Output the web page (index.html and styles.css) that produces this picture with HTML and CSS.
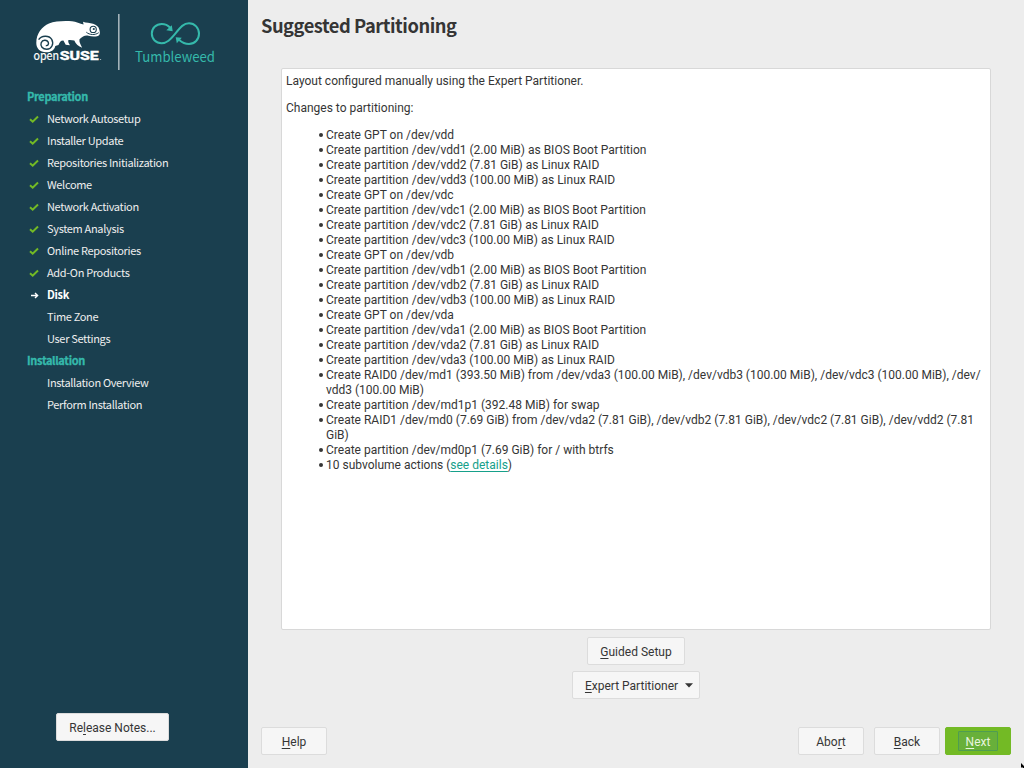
FILE: index.html
```html
<!DOCTYPE html>
<html lang="en">
<head>
<meta charset="utf-8">
<title>Suggested Partitioning</title>
<link rel="stylesheet" href="styles.css">
</head>
<body>
<div class="installer">
  <aside class="sidebar">
    <svg class="brand" width="248" height="85" viewBox="0 0 248 85">
      <path class="chameleon" d="M46 52.3C40 52.3 36.3 48.5 36.3 43C36.3 33.5 42 26.5 49 23.5C55 21 65 20.7 72 21.3C76 21.7 80 23.8 83.6 24.6L83 21.8C86 23 90 22.8 93 23.8C96.5 25 98.5 26.5 99.2 29.2C99.9 31.5 100.3 33.5 99.3 34.9C97.5 37 92 36.7 88.5 35.8C85 35 82.5 36.5 79.5 39.3C79 42 80.3 44 82.2 47.7C78.5 46.8 75.8 44 74.3 40.6C72.5 40 70 39.7 68.4 40C67.8 42 68.9 43.4 70 45.3L65.7 44.8L63.4 40.6C60.5 40.5 59.7 42.4 58.5 45L55.3 46C54.5 50 51 52.3 46 52.3Z"/>
      <path class="spiral" d="M38.6 39.6C41.5 35.4 48.8 34.8 51.7 39.3C54.2 43.8 51.6 49.2 46.7 49.3C42.6 49.3 40 46 41.2 42.8C42.5 39.6 46.8 39.4 48.2 42.1C49.1 44.2 47.8 46 45.8 45.5"/>
      <circle class="eye" cx="93.2" cy="29.4" r="3.1"/>
      <circle class="pupil" cx="93.8" cy="29" r="1.1"/>
      <path class="mouth" d="M86.3 32.2C89.5 35 95 35.4 98.7 32.7"/>
      <text class="logo-open" x="33.5" y="60.2" textLength="25.5" lengthAdjust="spacingAndGlyphs">open</text>
      <text class="logo-suse" x="59.7" y="60.2" textLength="39" lengthAdjust="spacingAndGlyphs">SUSE</text>
      <circle class="logo-mark" cx="100.6" cy="59.5" r=".6"/>
      <path class="divider" d="M118.8 14V70"/>
      <path class="loop" d="M170.2 27.7C167.8 25.2 165 24 161.8 24C156 24 151.8 28.3 151.8 33.6C151.8 39 156 43.2 161.5 43.2C167 43.2 170.2 39.8 175.3 33.6C180.5 27.2 183.6 23.2 189 23.2C194.8 23.2 199 28 199 33.7C199 39.4 194.7 44 189 44C185.3 44 182.3 42.8 179.3 40"/>
      <path class="arrow" d="M172.7 31.2L166.3 30.3L171.8 25.3ZM175.7 37.2L181.8 37.7L176.8 43.2Z"/>
      <text class="logo-name" x="135" y="61.5" textLength="80" lengthAdjust="spacingAndGlyphs">Tumbleweed</text>
    </svg>
    <nav class="steps">
      <div class="stage">Preparation</div>
      <div class="step"><svg class="mark" viewBox="0 0 10 10"><path class="check" d="M1 5.2L3.7 7.7L9 2.5"/></svg><span>Network Autosetup</span></div>
      <div class="step"><svg class="mark" viewBox="0 0 10 10"><path class="check" d="M1 5.2L3.7 7.7L9 2.5"/></svg><span>Installer Update</span></div>
      <div class="step"><svg class="mark" viewBox="0 0 10 10"><path class="check" d="M1 5.2L3.7 7.7L9 2.5"/></svg><span>Repositories Initialization</span></div>
      <div class="step"><svg class="mark" viewBox="0 0 10 10"><path class="check" d="M1 5.2L3.7 7.7L9 2.5"/></svg><span>Welcome</span></div>
      <div class="step"><svg class="mark" viewBox="0 0 10 10"><path class="check" d="M1 5.2L3.7 7.7L9 2.5"/></svg><span>Network Activation</span></div>
      <div class="step"><svg class="mark" viewBox="0 0 10 10"><path class="check" d="M1 5.2L3.7 7.7L9 2.5"/></svg><span>System Analysis</span></div>
      <div class="step"><svg class="mark" viewBox="0 0 10 10"><path class="check" d="M1 5.2L3.7 7.7L9 2.5"/></svg><span>Online Repositories</span></div>
      <div class="step"><svg class="mark" viewBox="0 0 10 10"><path class="check" d="M1 5.2L3.7 7.7L9 2.5"/></svg><span>Add-On Products</span></div>
      <div class="step current"><svg class="mark" viewBox="0 0 10 10"><path class="pointer" d="M2 5.5H8.5M6 3L8.6 5.5L6 8"/></svg><span>Disk</span></div>
      <div class="step"><i class="mark"></i><span>Time Zone</span></div>
      <div class="step"><i class="mark"></i><span>User Settings</span></div>
      <div class="stage">Installation</div>
      <div class="step"><i class="mark"></i><span>Installation Overview</span></div>
      <div class="step"><i class="mark"></i><span>Perform Installation</span></div>
    </nav>
    <button class="btn release">Re<u>l</u>ease Notes...</button>
  </aside>
  <main class="main">
    <h1 class="title">Suggested Partitioning</h1>
    <section class="report">
      <p>Layout configured manually using the Expert Partitioner.</p>
      <p>Changes to partitioning:</p>
      <ul class="actions">
        <li>Create GPT on /dev/vdd</li>
        <li>Create partition /dev/vdd1 (2.00 MiB) as BIOS Boot Partition</li>
        <li>Create partition /dev/vdd2 (7.81 GiB) as Linux RAID</li>
        <li>Create partition /dev/vdd3 (100.00 MiB) as Linux RAID</li>
        <li>Create GPT on /dev/vdc</li>
        <li>Create partition /dev/vdc1 (2.00 MiB) as BIOS Boot Partition</li>
        <li>Create partition /dev/vdc2 (7.81 GiB) as Linux RAID</li>
        <li>Create partition /dev/vdc3 (100.00 MiB) as Linux RAID</li>
        <li>Create GPT on /dev/vdb</li>
        <li>Create partition /dev/vdb1 (2.00 MiB) as BIOS Boot Partition</li>
        <li>Create partition /dev/vdb2 (7.81 GiB) as Linux RAID</li>
        <li>Create partition /dev/vdb3 (100.00 MiB) as Linux RAID</li>
        <li>Create GPT on /dev/vda</li>
        <li>Create partition /dev/vda1 (2.00 MiB) as BIOS Boot Partition</li>
        <li>Create partition /dev/vda2 (7.81 GiB) as Linux RAID</li>
        <li>Create partition /dev/vda3 (100.00 MiB) as Linux RAID</li>
        <li>Create RAID0 /dev/md1 (393.50 MiB) from /dev/vda3 (100.00 MiB), /dev/vdb3 (100.00 MiB), /dev/vdc3 (100.00 MiB), /dev/<br>vdd3 (100.00 MiB)</li>
        <li>Create partition /dev/md1p1 (392.48 MiB) for swap</li>
        <li>Create RAID1 /dev/md0 (7.69 GiB) from /dev/vda2 (7.81 GiB), /dev/vdb2 (7.81 GiB), /dev/vdc2 (7.81 GiB), /dev/vdd2 (7.81<br>GiB)</li>
        <li>Create partition /dev/md0p1 (7.69 GiB) for / with btrfs</li>
        <li>10 subvolume actions (<a class="details" href="#">see details</a>)</li>
      </ul>
    </section>
    <div class="choices">
      <button class="btn guided"><u>G</u>uided Setup</button>
      <button class="btn expert"><span><u>E</u>xpert Partitioner</span><svg width="8" height="5" viewBox="0 0 8 5"><path d="M0 .3H8L4 4.5Z"/></svg></button>
    </div>
    <footer class="footer">
      <button class="btn help"><u>H</u>elp</button>
      <button class="btn abort">Abo<u>r</u>t</button>
      <button class="btn back"><u>B</u>ack</button>
      <button class="btn next"><span class="focus"><u>N</u>ext</span></button>
    </footer>
  </main>
  <svg class="cursor" width="3" height="5" viewBox="0 0 3 5"><path d="M0 0L3 3V5H2L1 4L0 5Z"/></svg>
</div>
</body>
</html>
```

FILE: styles.css
```css
* { box-sizing: border-box; }
body { margin: 0; font-family: Roboto, sans-serif; font-size: 12px; color: #353535; }
.installer { position: relative; display: flex; width: 1024px; height: 768px; overflow: hidden; background: #ededed; }

.sidebar { display: flex; flex-direction: column; flex: none; width: 248px; height: 768px; background: #1a3f4f; }
.brand { display: block; flex: none; }
.chameleon { fill: #fff; }
.spiral { fill: none; stroke: #1a3f4f; stroke-width: 1.4; }
.eye { fill: #fff; stroke: #1a3f4f; stroke-width: 1.1; }
.pupil { fill: #1a3f4f; }
.mouth { fill: none; stroke: #1a3f4f; stroke-width: 1; }
.logo-open { fill: #fff; font: 12px "Noto Sans CJK SC", sans-serif; stroke: #fff; stroke-width: .2; }
.logo-suse { fill: #fff; font: 700 13px Roboto, sans-serif; stroke: #fff; stroke-width: .4; }
.logo-mark { fill: #c4ced2; }
.divider { stroke: #a3b2b9; stroke-width: 1.6; }
.loop { fill: none; stroke: #35b9ab; stroke-width: 2; }
.arrow { fill: #35b9ab; }
.logo-name { fill: #35b9ab; font: 14px "Noto Sans CJK SC", sans-serif; }

.steps { flex: 1; padding-left: 27px; font-family: "Noto Sans CJK SC", sans-serif; font-size: 11px; line-height: 22px; letter-spacing: -.33px; color: #eee; white-space: nowrap; }
.stage { height: 22px; font-weight: 700; color: #35b9ab; -webkit-text-stroke: .3px #35b9ab; }
.step { display: flex; align-items: center; height: 22px; }
.mark { flex: none; width: 10px; height: 10px; margin: 1px 8px 0 2px; }
.check { fill: none; stroke: #73ba25; stroke-width: 2; }
.pointer { fill: none; stroke: #fff; stroke-width: 1.4; }
.current { font-weight: 700; color: #fff; }

.btn { display: flex; align-items: center; justify-content: center; height: 28px; padding: 2px 0 0; border: 1px solid #dcdcdc; border-radius: 2px; background: #f6f6f6; font: 12px/14px Roboto, sans-serif; color: #353535; white-space: pre; }
.btn u { text-underline-offset: 2px; text-decoration-thickness: 1px; text-decoration-skip-ink: none; }
.release { width: 113px; margin: 0 0 27px 56px; }

.main { display: flex; flex-direction: column; flex: 1; min-width: 0; padding: 0 13px; }
.title { height: 68px; margin: 0; padding-top: 11px; font: 700 18.3px/28px "Noto Sans CJK SC", sans-serif; letter-spacing: -.47px; color: #353535; }
.report { height: 562px; margin: 0 20px; padding: 5px 4px; border: 1px solid #d8d8d8; border-radius: 2px; background: #fff; line-height: 15px; white-space: nowrap; }
.report p { margin: 0 0 12px; }
.actions { margin: 0; padding: 0 0 0 40px; list-style: none; }
.actions li::before { content: ""; float: left; width: 4px; height: 4px; margin: 5px 0 0 -7px; border-radius: 50%; background: #353535; }
.details { color: #16a08a; text-underline-offset: 2px; text-decoration-thickness: 1px; text-decoration-skip-ink: none; }
.choices { display: flex; flex-direction: column; align-items: center; gap: 6px; padding-top: 7px; height: 97px; }
.guided { width: 98px; }
.expert { width: 128px; gap: 7px; padding-left: 6px; }
.expert svg { fill: #353535; margin-top: -2px; }
.footer { display: flex; }
.help { width: 66px; margin-right: auto; }
.abort { width: 66px; }
.back { width: 66px; margin-left: 10px; }
.next { width: 66px; margin-left: 5px; padding: 0; border-color: #73ba25; background: #73ba25; color: #e9f5df; }
.focus { width: 40px; height: 20px; padding-top: 3px; border: 1px solid #4f9d51; border-radius: 1px; background: #68b03a; text-align: center; }
.cursor { position: absolute; right: 0; bottom: 0; }
```
